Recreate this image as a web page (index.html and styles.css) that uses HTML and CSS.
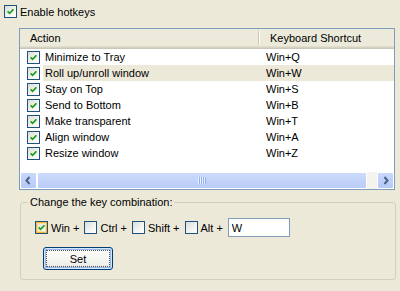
FILE: index.html
```html
<!DOCTYPE html>
<html lang="en">
<head>
  <meta charset="UTF-8">
  <title>Hotkeys</title>
  <link rel="stylesheet" href="styles.css">
</head>
<body>
  <div class="enable">
    <span class="cb"><svg viewBox="0 0 7 7"><path d="M0.6 3.3 L2.6 5.3 L6.4 1.3"/></svg></span>
    <span>Enable hotkeys</span>
  </div>

  <div class="list">
    <div class="lv-head">
      <div class="h1">Action</div>
      <div class="h2">Keyboard Shortcut</div>
    </div>

    <div class="lv-row">
      <span class="cb"><svg viewBox="0 0 7 7"><path d="M0.6 3.3 L2.6 5.3 L6.4 1.3"/></svg></span>
      <div class="cells"><span class="name">Minimize to Tray</span><span class="key">Win+Q</span></div>
    </div>
    <div class="lv-row">
      <span class="cb"><svg viewBox="0 0 7 7"><path d="M0.6 3.3 L2.6 5.3 L6.4 1.3"/></svg></span>
      <div class="cells sel"><span class="name">Roll up/unroll window</span><span class="key">Win+W</span></div>
    </div>
    <div class="lv-row">
      <span class="cb"><svg viewBox="0 0 7 7"><path d="M0.6 3.3 L2.6 5.3 L6.4 1.3"/></svg></span>
      <div class="cells"><span class="name">Stay on Top</span><span class="key">Win+S</span></div>
    </div>
    <div class="lv-row">
      <span class="cb"><svg viewBox="0 0 7 7"><path d="M0.6 3.3 L2.6 5.3 L6.4 1.3"/></svg></span>
      <div class="cells"><span class="name">Send to Bottom</span><span class="key">Win+B</span></div>
    </div>
    <div class="lv-row">
      <span class="cb"><svg viewBox="0 0 7 7"><path d="M0.6 3.3 L2.6 5.3 L6.4 1.3"/></svg></span>
      <div class="cells"><span class="name">Make transparent</span><span class="key">Win+T</span></div>
    </div>
    <div class="lv-row">
      <span class="cb"><svg viewBox="0 0 7 7"><path d="M0.6 3.3 L2.6 5.3 L6.4 1.3"/></svg></span>
      <div class="cells"><span class="name">Align window</span><span class="key">Win+A</span></div>
    </div>
    <div class="lv-row">
      <span class="cb"><svg viewBox="0 0 7 7"><path d="M0.6 3.3 L2.6 5.3 L6.4 1.3"/></svg></span>
      <div class="cells"><span class="name">Resize window</span><span class="key">Win+Z</span></div>
    </div>

    <div class="hscroll">
      <span class="sb-btn"><svg viewBox="0 0 15 15"><path d="M8.5 4 L5.5 7.5 L8.5 11"/></svg></span>
      <span class="sb-thumb"><span class="grip"></span></span>
      <span class="sb-track"></span>
      <span class="sb-btn"><svg viewBox="0 0 15 15"><path d="M6.5 4 L9.5 7.5 L6.5 11"/></svg></span>
    </div>
  </div>

  <fieldset class="group">
    <legend>Change the key combination:</legend>
    <div class="keys">
      <label class="opt"><span class="cb hot"><svg viewBox="0 0 7 7"><path d="M0.6 3.3 L2.6 5.3 L6.4 1.3"/></svg></span>Win +</label>
      <label class="opt"><span class="cb"></span>Ctrl +</label>
      <label class="opt"><span class="cb"></span>Shift +</label>
      <label class="opt"><span class="cb"></span>Alt +</label>
      <input type="text" class="keybox" value="W">
    </div>
    <button class="btn">Set</button>
  </fieldset>
</body>
</html>
```

FILE: styles.css
```css
body {
  margin: 0;
  background: #ECE9D8;
  font-family: "Liberation Sans", Arial, sans-serif;
  font-size: 11px;
  color: #000;
}

/* xp style checkbox */
.cb {
  width: 13px; height: 13px; flex: none;
  box-sizing: border-box;
  border: 1px solid #1C5180;
  background: linear-gradient(135deg, #DCDCD7 0%, #F4F4F2 60%, #FFFFFF 100%);
  display: flex; align-items: center; justify-content: center;
}
.cb svg { width: 7px; height: 7px; }
.cb path { fill: none; stroke: #21A121; stroke-width: 1.8; }
.cb.hot { box-shadow: inset 0 0 0 1px #F8B636, inset 0 0 0 2px #FEDF9C; }

.enable {
  display: flex; align-items: center; gap: 3px;
  height: 13px; margin: 5px 0 0 4px;
}

.list {
  margin: 10px 0 0 19px;
  width: 376px; height: 162px;
  box-sizing: border-box;
  border: 1px solid #7F9DB9;
  background: #fff;
  display: flex; flex-direction: column;
}
.lv-head {
  display: flex; align-items: center;
  height: 20px; flex: none;
  background: linear-gradient(to bottom, #EBEADB 0, #EBEADB 17px, #E2DECD 17px, #E2DECD 18px, #D6D2C2 18px, #D6D2C2 19px, #CBC7B8 19px);
}
.lv-head .h1 {
  width: 228px; padding-left: 10px;
  height: 14px; line-height: 14px;
  border-right: 1px solid #C7C5B2;
  box-shadow: 1px 0 0 #fff;
  margin-bottom: 2px;
}
.lv-head .h2 { padding-left: 11px; margin-bottom: 2px; }

.lv-row { display: flex; align-items: center; height: 16px; flex: none; }
.lv-row .cb { margin-left: 7px; }
.cells { display: flex; align-items: center; height: 16px; flex: 1; margin-left: 3px; }
.cells.sel { background: #ECE9D8; }
.cells .name { width: 213px; padding-left: 2px; }
.cells .key { padding-left: 8px; }

.hscroll {
  margin-top: auto;
  display: flex; height: 17px; flex: none;
  background: #FCFCFA;
}
.sb-btn {
  width: 17px; height: 17px; flex: none;
  box-sizing: border-box;
  border: 1px solid #fff;
  border-radius: 2px;
  background: linear-gradient(to bottom, #C9D8FC, #B5CAF7);
  display: flex; align-items: center; justify-content: center;
}
.sb-btn svg { width: 15px; height: 15px; }
.sb-btn path { fill: none; stroke: #4D6185; stroke-width: 2; }
.sb-thumb {
  width: 330px; flex: none;
  box-sizing: border-box;
  border: 1px solid #fff;
  border-radius: 2px;
  background: linear-gradient(to bottom, #CCDAFC, #BACDF8);
  display: flex; align-items: center; justify-content: center;
}
.grip {
  width: 8px; height: 7px;
  background: repeating-linear-gradient(to right, #EEF4FE 0 1px, #8CB0F8 1px 2px);
}
.sb-track { flex: 1; background: #F4F3EE; }

.group {
  margin: 6px 0 0 20px;
  width: 376px;
  box-sizing: border-box;
  padding: 9px 0 9px 14px;
  border: 1px solid #D0D0BF;
  border-radius: 3px;
}
.group legend {
  padding: 0 2px;
  margin-left: -7px;
  line-height: 13px;
}
.keys { display: flex; align-items: center; height: 19px; }
.opt { display: flex; align-items: center; gap: 3px; margin-right: 5px; }
.keybox {
  width: 62px; height: 19px;
  box-sizing: border-box;
  border: 1px solid #7F9DB9;
  padding: 0 3px;
  font: inherit;
}
.btn {
  display: block;
  margin: 10px 0 0 8px;
  width: 70px; height: 23px;
  border: 1px solid #003C74;
  border-radius: 3px;
  background: linear-gradient(to bottom, #FFFFFF, #F0F0EA 80%, #D6D0C5);
  box-shadow: inset 0 0 0 1px #CEE7FF, inset 0 0 0 2px #98B8EA;
  font: inherit;
  color: #000;
  outline: 1px dotted #555;
  outline-offset: -4px;
}
```
